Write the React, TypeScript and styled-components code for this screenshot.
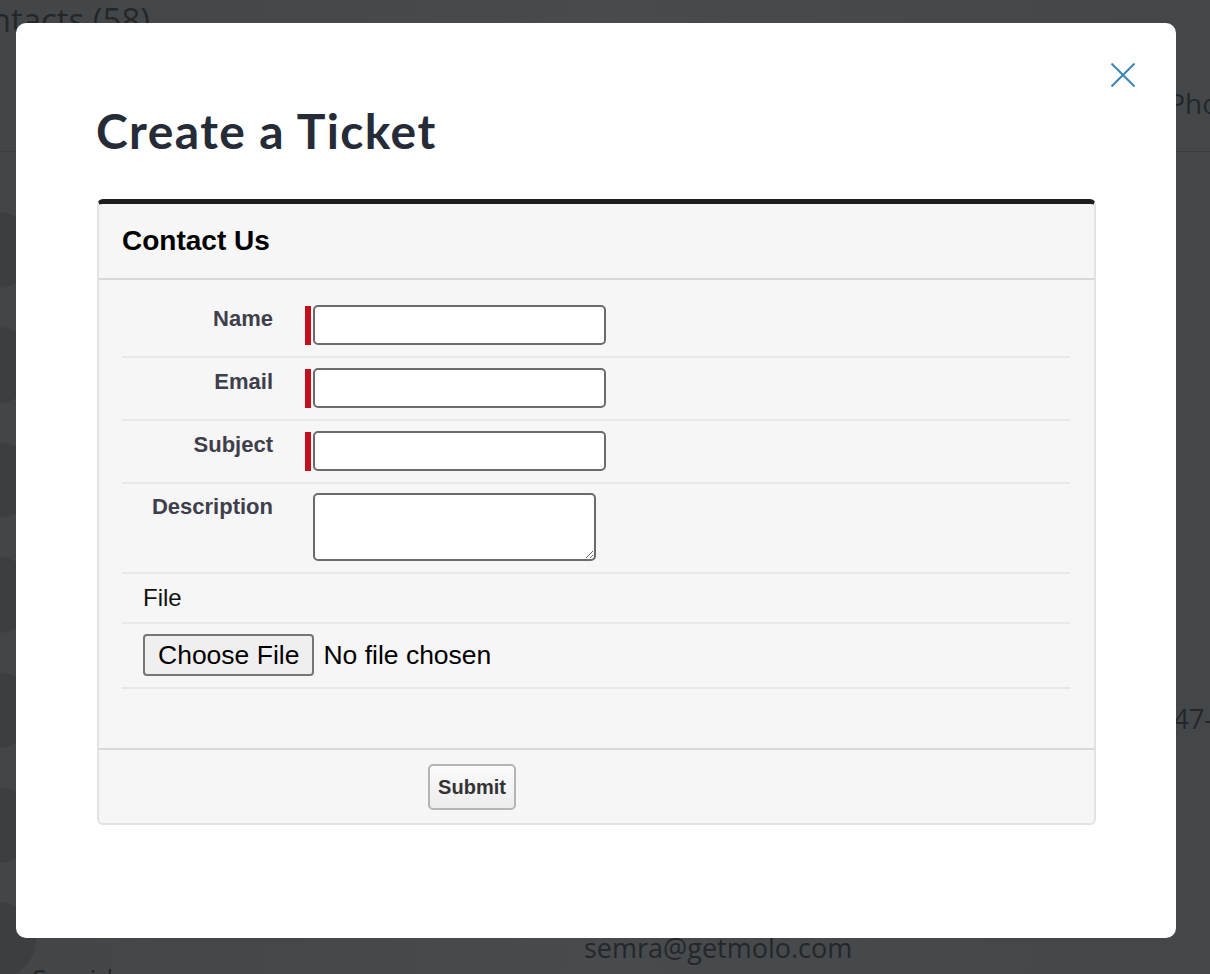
import styled, { createGlobalStyle } from 'styled-components'

const Global = createGlobalStyle`
  html, body {
    margin: 0;
    padding: 0;
    height: 100%;
    overflow: hidden;
  }
  body {
    font-family: "Liberation Sans", Arial, sans-serif;
    background: #45494c;
  }
`

// dimmed page behind the modal
const Page = styled.div`
  height: 100vh;
  overflow: hidden;
  background: linear-gradient(90deg, #434649 0%, #474b4e 50%, #43474a 100%);
  color: #24272a;
  font-family: "Open Sans", "DejaVu Sans", sans-serif;
`

const PageHeader = styled.div`
  height: 152px;
  border-bottom: 1px solid #3a3d40;
  display: flex;
  justify-content: space-between;
  box-sizing: border-box;
`

const PageTitle = styled.h2`
  margin: 0 0 0 -50px;
  font-size: 33px;
  font-weight: 400;
  line-height: 40px;
`

const ColHead = styled.div`
  margin: 84px -42px 0 0;
  font-size: 28px;
`

const ContactList = styled.div`
  display: flex;
  flex-direction: column;
  padding-top: 40px;
`

const ContactRow = styled.div`
  height: 115px;
  display: flex;
  align-items: center;
`

const Avatar = styled.div`
  width: 76px;
  height: 76px;
  border-radius: 50%;
  margin-left: -40px;
  background: #3c3f42;
  flex-shrink: 0;
`

const RowText = styled.div<{ $left: number; $top?: number }>`
  margin-left: ${p => p.$left}px;
  margin-top: ${p => p.$top || 0}px;
  font-size: 27px;
  line-height: 32px;
  white-space: nowrap;
`

const RowDetails = styled.div`
  display: flex;
  flex-direction: column;
  margin-top: 48px;
`

const Modal = styled.div`
  position: fixed;
  left: 16px;
  top: 23px;
  width: 1160px;
  height: 915px;
  background: #fff;
  border-radius: 10px;
  box-sizing: border-box;
  padding: 80px 80px 0 80px;
`

const CloseButton = styled.button`
  position: absolute;
  top: 36px;
  right: 37px;
  width: 32px;
  height: 32px;
  padding: 0;
  border: 0;
  background: none;
  cursor: pointer;
  display: flex;
  align-items: center;
  justify-content: center;
`

const Title = styled.h1`
  margin: 0 0 40px 0;
  font-family: Lato, "Open Sans", sans-serif;
  font-weight: 700;
  font-size: 48px;
  letter-spacing: 1.4px;
  line-height: 56px;
  color: #252c37;
`

const Card = styled.div`
  width: 999px;
  margin-left: 1px;
  box-sizing: border-box;
  background: #f6f6f6;
  border: 2px solid #e2e2e2;
  border-top: 5px solid #1e1e1e;
  border-radius: 6px;
`

const CardHeader = styled.div`
  height: 74px;
  display: flex;
  align-items: center;
  padding-left: 23px;
  border-bottom: 2px solid #d8d8d8;
  font-size: 28px;
  font-weight: 700;
  color: #000;
`

const CardBody = styled.div`
  padding: 15px 24px 59px 23px;
`

const FieldRow = styled.div<{ $pad?: string }>`
  display: flex;
  align-items: flex-start;
  padding: ${p => p.$pad || '10px 0 11px'};
  border-bottom: 2px solid #e8e8e8;
`

const Label = styled.label`
  width: 151px;
  text-align: right;
  font-size: 22px;
  font-weight: 700;
  color: #3e3e4c;
  line-height: 25px;
  padding-top: 1px;
  flex-shrink: 0;
`

const Control = styled.div<{ $required?: boolean }>`
  margin-left: 32px;
  display: flex;
  gap: 2px;
  &::before {
    content: '';
    display: block;
    width: 6px;
    height: 39px;
    margin-top: 1px;
    background: ${p => (p.$required ? '#c20f1b' : 'transparent')};
  }
`

const TextInput = styled.input`
  width: 293px;
  height: 40px;
  box-sizing: border-box;
  border: 2px solid #6b6b6b;
  border-radius: 5px;
  background: #fff;
  font-size: 18px;
  padding: 0 6px;
`

const TextArea = styled.textarea`
  width: 283px;
  height: 68px;
  box-sizing: border-box;
  border: 2px solid #6b6b6b;
  border-radius: 5px;
  background: #fff;
  font-size: 18px;
  margin: 0;
  display: block;
`

const PlainLabel = styled.div`
  padding-left: 21px;
  font-size: 24px;
  line-height: 25px;
  color: #111;
`

const FileInput = styled.input`
  margin-left: 21px;
  font-family: "Liberation Sans", Arial, sans-serif;
  font-size: 26.5px;
  color: #000;
  &::file-selector-button {
    font-family: "Liberation Sans", Arial, sans-serif;
    font-size: 26.5px;
    height: 42px;
    padding: 0 13px;
    margin-right: 9px;
    background: #efefef;
    border: 2px solid #767676;
    border-radius: 4px;
    color: #000;
  }
`

const CardFooter = styled.div`
  border-top: 2px solid #d8d8d8;
  padding: 14px 0 13px 329px;
`

const SubmitButton = styled.button`
  width: 88px;
  height: 46px;
  font-family: "Liberation Sans", Arial, sans-serif;
  font-size: 20px;
  font-weight: 700;
  color: #333;
  background: linear-gradient(#fbfbfb, #ececec);
  border: 2px solid #b5b5b5;
  border-radius: 5px;
  padding: 0;
`

const rows = [1, 2, 3, 4, 5, 6, 7]

export default function App() {
  return (
    <>
      <Global />
      <Page>
        <PageHeader>
          <PageTitle>Contacts (58)</PageTitle>
          <ColHead>Phone</ColHead>
        </PageHeader>
        <ContactList>
          {rows.map(r => (
            <ContactRow key={r}>
              <Avatar />
              {r === 5 && <RowText $left={1122} $top={18}>347-</RowText>}
              {r === 7 && (
                <RowDetails>
                  <RowText $left={548}>semra@getmolo.com</RowText>
                  <RowText $left={-4}>Seaside</RowText>
                </RowDetails>
              )}
            </ContactRow>
          ))}
        </ContactList>
      </Page>

      <Modal>
        <CloseButton aria-label="Close">
          <svg width="24" height="24" viewBox="0 0 24 24">
            <path d="M0.5 0.5 L23.5 23.5 M23.5 0.5 L0.5 23.5" stroke="#3b86b0" strokeWidth="2" fill="none" />
          </svg>
        </CloseButton>
        <Title>Create a Ticket</Title>
        <Card>
          <CardHeader>Contact Us</CardHeader>
          <CardBody>
            <FieldRow>
              <Label>Name</Label>
              <Control $required>
                <TextInput type="text" />
              </Control>
            </FieldRow>
            <FieldRow>
              <Label>Email</Label>
              <Control $required>
                <TextInput type="email" />
              </Control>
            </FieldRow>
            <FieldRow>
              <Label>Subject</Label>
              <Control $required>
                <TextInput type="text" />
              </Control>
            </FieldRow>
            <FieldRow $pad="9px 0 11px">
              <Label>Description</Label>
              <Control>
                <TextArea />
              </Control>
            </FieldRow>
            <FieldRow $pad="11px 0 12px">
              <PlainLabel>File</PlainLabel>
            </FieldRow>
            <FieldRow $pad="10px 0 11px">
              <FileInput type="file" />
            </FieldRow>
          </CardBody>
          <CardFooter>
            <SubmitButton type="button">Submit</SubmitButton>
          </CardFooter>
        </Card>
      </Modal>
    </>
  )
}
